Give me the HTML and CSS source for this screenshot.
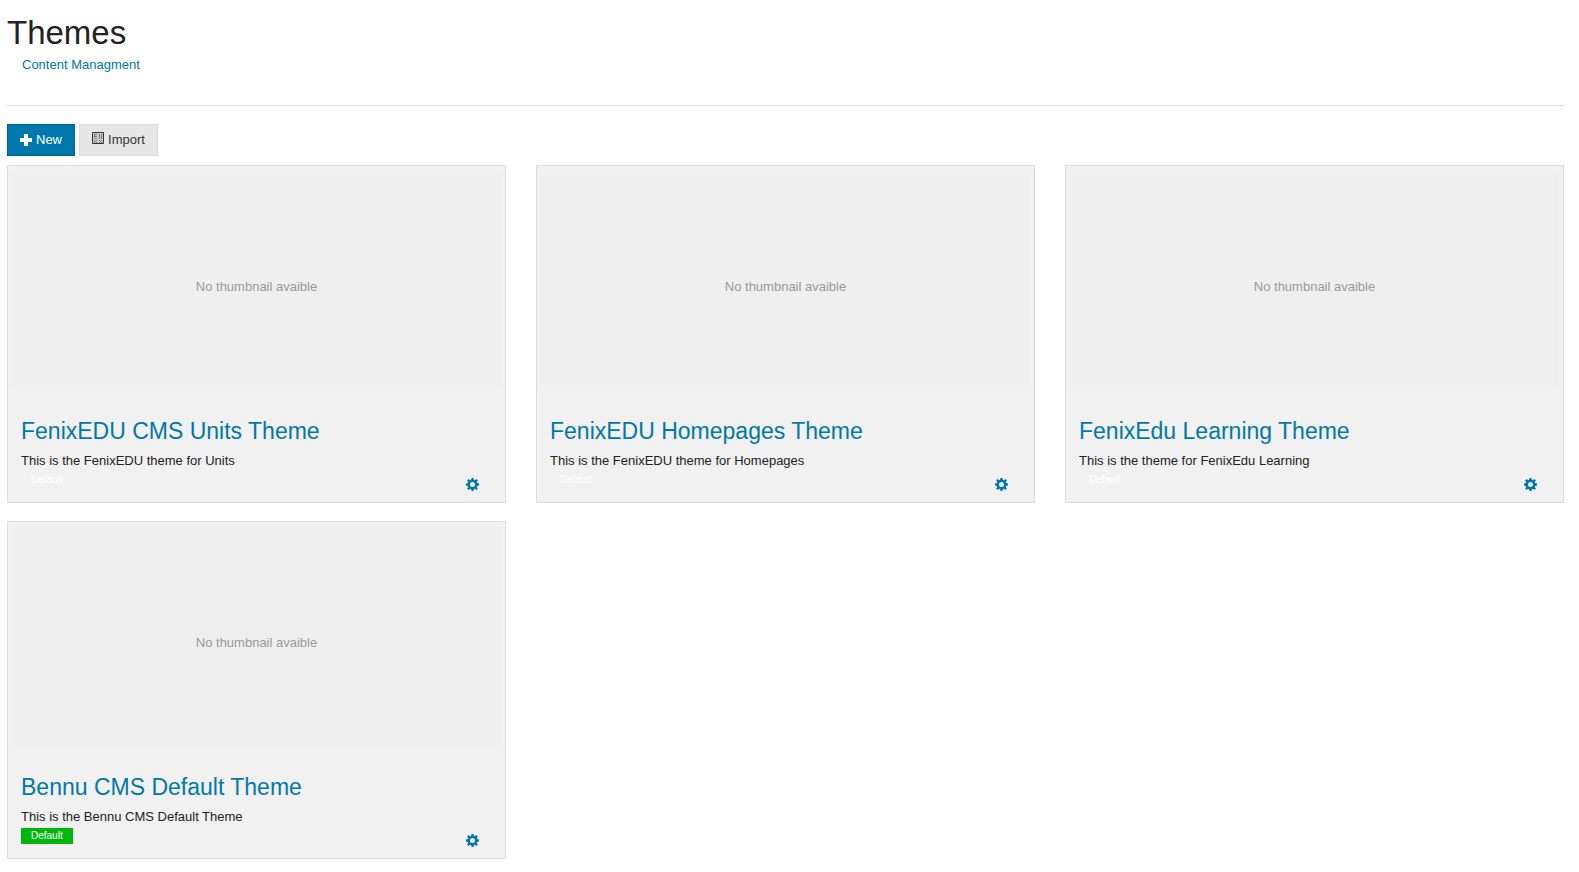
FILE: index.html
```html
<!DOCTYPE html>
<html lang="en">
<head>
<meta charset="utf-8">
<title>Themes</title>
<link rel="stylesheet" href="styles.css">
</head>
<body>
<svg class="sprite" aria-hidden="true">
  <symbol id="cog" viewBox="0 0 13 13">
    <path fill-rule="evenodd" d="M5.5 0h2l.4 1.8 1 .4L10.500 1.100 11.900 2.500 10.800 4.100l.4 1L13 5.500v2l-1.800.4-.4 1 1.100 1.600-1.400 1.400-1.600-1.100-1 .4L7.500 13h-2l-.4-1.800-1-.4-1.600 1.100-1.400-1.400 1.100-1.600-.4-1L0 7.500v-2l1.800-.4.400-1L1.100 2.500 2.500 1.100l1.600 1.100 1-.4zM6.500 4a2.500 2.500 0 1 0 0 5 2.500 2.500 0 0 0 0-5z"/>
  </symbol>
</svg>
<header class="page-header">
  <h1 class="page-title">Themes</h1>
  <a class="breadcrumb" href="#">Content Managment</a>
</header>
<main>
  <div class="toolbar">
    <button class="btn btn-primary" type="button">
      <svg class="icon" viewBox="0 0 12 12" aria-hidden="true"><path d="M4 0h4v4h4v4H8v4H4V8H0V4h4z"/></svg>New
    </button>
    <button class="btn btn-default" type="button">
      <svg class="icon icon-import" viewBox="0 0 12 12" aria-hidden="true"><path d="M.5.5h11v11H.5z"/><path class="icon-detail" d="M2.500 6V2M3 2.500h2M3 4.500h2M3 6.500h2M7.500 2v5M9.500 2v5M2 8.500h1M4 8.500h1M3 9.500h1M2 10.500h1M4 10.500h1M7 8.500h1M9 8.500h1M8 9.500h1M7 10.500h1M9 10.500h1"/></svg>Import
    </button>
  </div>
  <div class="themes">
    <article class="card">
      <div class="thumb">No thumbnail avaible</div>
      <div class="caption">
        <h2 class="card-title"><a href="#">FenixEDU CMS Units Theme</a></h2>
        <p class="description">This is the FenixEDU theme for Units</p>
        <div class="card-footer"><span class="label">Default</span><button class="settings" type="button" aria-label="Settings"><svg class="cog"><use href="#cog"/></svg></button></div>
      </div>
    </article>
    <article class="card">
      <div class="thumb">No thumbnail avaible</div>
      <div class="caption">
        <h2 class="card-title"><a href="#">FenixEDU Homepages Theme</a></h2>
        <p class="description">This is the FenixEDU theme for Homepages</p>
        <div class="card-footer"><span class="label">Default</span><button class="settings" type="button" aria-label="Settings"><svg class="cog"><use href="#cog"/></svg></button></div>
      </div>
    </article>
    <article class="card">
      <div class="thumb">No thumbnail avaible</div>
      <div class="caption">
        <h2 class="card-title"><a href="#">FenixEdu Learning Theme</a></h2>
        <p class="description">This is the theme for FenixEdu Learning</p>
        <div class="card-footer"><span class="label">Default</span><button class="settings" type="button" aria-label="Settings"><svg class="cog"><use href="#cog"/></svg></button></div>
      </div>
    </article>
    <article class="card">
      <div class="thumb">No thumbnail avaible</div>
      <div class="caption">
        <h2 class="card-title"><a href="#">Bennu CMS Default Theme</a></h2>
        <p class="description">This is the Bennu CMS Default Theme</p>
        <div class="card-footer"><span class="label label-active">Default</span><button class="settings" type="button" aria-label="Settings"><svg class="cog"><use href="#cog"/></svg></button></div>
      </div>
    </article>
  </div>
</main>
</body>
</html>
```
FILE: styles.css
```css
* { box-sizing: border-box; }

body {
  margin: 0;
  padding: 11px 15px 14px 7px;
  background: #fefefe;
  color: #222;
  font: 13px/20px "Liberation Sans", Arial, sans-serif;
}

a { color: #0078ad; text-decoration: none; }

.sprite { display: none; }

.page-header {
  padding-bottom: 30px;
  border-bottom: 1px solid #ddd;
}

.page-title {
  margin: 0 0 1px;
  font-size: 33px;
  font-weight: 400;
  line-height: 43px;
}

.breadcrumb {
  display: block;
  width: fit-content;
  margin-left: 15px;
}

.toolbar {
  display: flex;
  gap: 4px;
  margin: 18px 0 9px;
}

.btn {
  display: flex;
  align-items: center;
  gap: 4px;
  height: 32px;
  padding: 0 12px;
  border: 1px solid;
  font: inherit;
}

.btn-primary { background: #0078ad; border-color: #00638f; color: #fff; }
.btn-default { background: #e7e7e7; border-color: #dadada; color: #333; }

.icon { width: 12px; height: 12px; fill: currentColor; }
.icon-import { margin-bottom: 4px; fill: #ccc; stroke: currentColor; }
.icon-detail { fill: none; stroke: #777; }

.themes {
  display: grid;
  grid-template-columns: repeat(3, minmax(0, 1fr));
  gap: 18px 30px;
}

.card {
  padding: 4px;
  border: 1px solid #ddd;
  background: #f1f1f1;
}

.thumb {
  display: grid;
  place-items: center;
  height: 220px;
  padding-top: 14px;
  background: #efefef;
  color: #999;
}

.caption { padding: 24px 22px 3px 9px; }

.card-title {
  margin: 0;
  font-size: 23px;
  font-weight: 400;
  line-height: 34px;
}

.description { margin: 2px 0 0; line-height: 22px; }

.card-footer {
  display: flex;
  justify-content: space-between;
  align-items: flex-start;
}

.label {
  padding: 0 10px;
  color: #fff;
  font-size: 10px;
  line-height: 16px;
}

.label-active { background: #00b70c; }

.settings {
  display: flex;
  padding: 6px 0 4px;
  border: 0;
  background: none;
  color: #0078ad;
}

.cog { width: 13px; height: 13px; fill: currentColor; }
```
